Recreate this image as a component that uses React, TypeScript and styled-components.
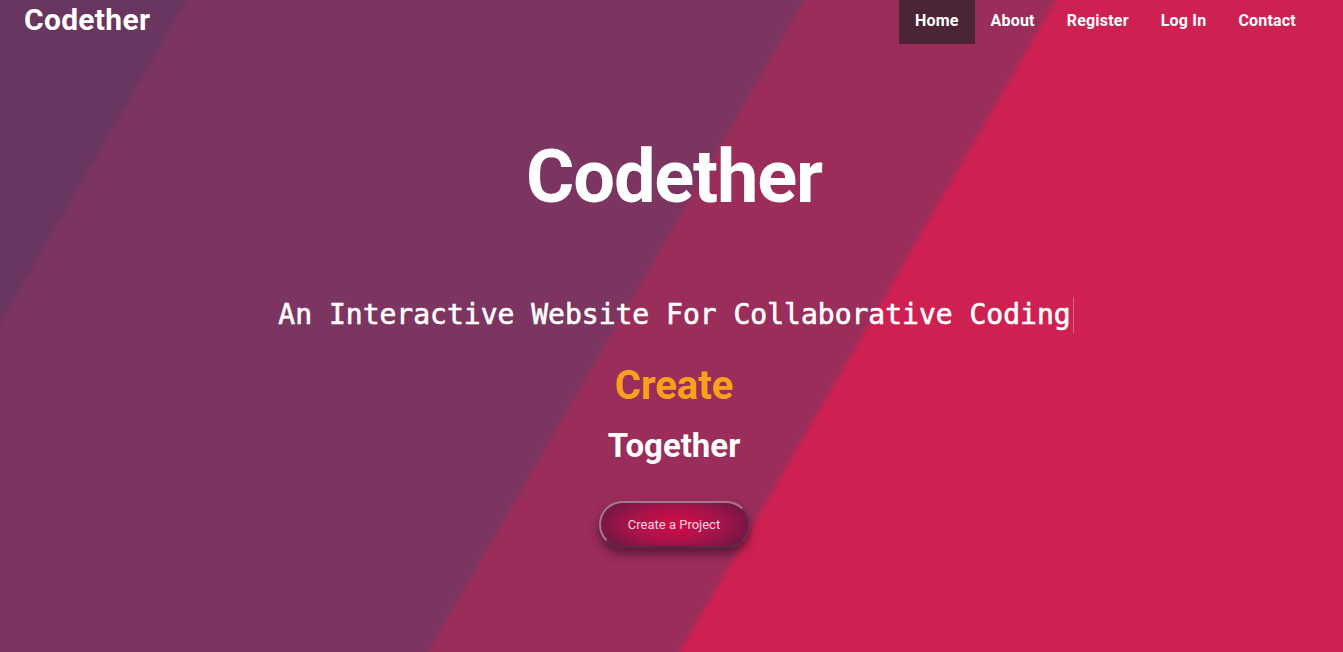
import React from 'react';
import styled, { createGlobalStyle } from 'styled-components';

const colors = {
    bandDeep: '#693660',
    bandPlum: '#7b3560',
    bandBerry: '#9a2d5a',
    bandRose: '#cf2052',
    navActive: '#4b2535',
    orange: '#f8a21b',
    white: '#ffffff',
};

const GlobalStyle = createGlobalStyle`
    html, body {
        margin: 0;
        padding: 0;
    }
    body {
        font-family: Roboto, 'Open Sans', sans-serif;
        color: ${colors.white};
    }
`;

const Page = styled.div`
    min-height: 100vh;
    display: flex;
    flex-direction: column;
    background: linear-gradient(
        120deg,
        ${colors.bandDeep} 0px,
        ${colors.bandDeep} 159px,
        ${colors.bandPlum} 165px,
        ${colors.bandPlum} 693px,
        ${colors.bandBerry} 700px,
        ${colors.bandBerry} 911px,
        ${colors.bandRose} 918px,
        ${colors.bandRose} 100%
    );
`;

const NavBar = styled.header`
    display: flex;
    justify-content: space-between;
    align-items: flex-start;
    padding: 0 31px 0 24px;
`;

const Brand = styled.a`
    font-size: 30px;
    font-weight: 700;
    line-height: 40px;
    color: ${colors.white};
    text-decoration: none;
    letter-spacing: 0.3px;
`;

const NavList = styled.nav`
    display: flex;
`;

const NavLink = styled.a<{ $active?: boolean }>`
    display: block;
    padding: 0 16px;
    height: 44px;
    line-height: 41px;
    font-size: 16px;
    font-weight: 700;
    letter-spacing: 0.2px;
    color: ${colors.white};
    text-decoration: none;
    background: ${props => (props.$active ? colors.navActive : 'transparent')};
`;

const Hero = styled.main`
    display: flex;
    flex-direction: column;
    align-items: center;
    text-align: center;
    padding-left: 5px;
`;

const Title = styled.h1`
    margin: 96px 0 0;
    font-size: 74px;
    font-weight: 700;
    line-height: 1;
    letter-spacing: -1.2px;
`;

const Tagline = styled.p`
    margin: 83px 0 0 4px;
    font-family: 'DejaVu Sans Mono', 'Liberation Mono', monospace;
    font-size: 28px;
    line-height: 36px;
    white-space: nowrap;
    padding-right: 2px;
    border-right: 1px solid #e0607a;
    -webkit-text-stroke: 0.6px ${colors.white};
`;

const Word = styled.div<{ $accent?: boolean }>`
    font-weight: 700;
    line-height: 1;
    font-size: ${props => (props.$accent ? '40px' : '33px')};
    color: ${props => (props.$accent ? colors.orange : colors.white)};
    margin-top: ${props => (props.$accent ? '33px' : '23px')};
`;

const ProjectButton = styled.button`
    margin-top: 39px;
    width: 151px;
    height: 47px;
    border-radius: 24px;
    border: 2px solid #a27a90;
    border-bottom-color: #5a2a45;
    border-right-color: #6a3050;
    background: radial-gradient(ellipse 60% 80% at center, #d60a42 0%, #a8134a 50%, #641743 100%);
    box-shadow: 0 6px 10px rgba(40, 10, 30, 0.55);
    color: #f7d6e4;
    font-family: Roboto, 'Open Sans', sans-serif;
    font-size: 13px;
    cursor: pointer;
`;

export default function App() {
    return (
        <>
            <GlobalStyle />
            <Page>
                <NavBar>
                    <Brand href="#">Codether</Brand>
                    <NavList>
                        <NavLink href="#" $active>Home</NavLink>
                        <NavLink href="#">About</NavLink>
                        <NavLink href="#">Register</NavLink>
                        <NavLink href="#">Log In</NavLink>
                        <NavLink href="#">Contact</NavLink>
                    </NavList>
                </NavBar>
                <Hero>
                    <Title>Codether</Title>
                    <Tagline>An Interactive Website For Collaborative Coding</Tagline>
                    <Word $accent>Create</Word>
                    <Word>Together</Word>
                    <ProjectButton>Create a Project</ProjectButton>
                </Hero>
            </Page>
        </>
    );
}
